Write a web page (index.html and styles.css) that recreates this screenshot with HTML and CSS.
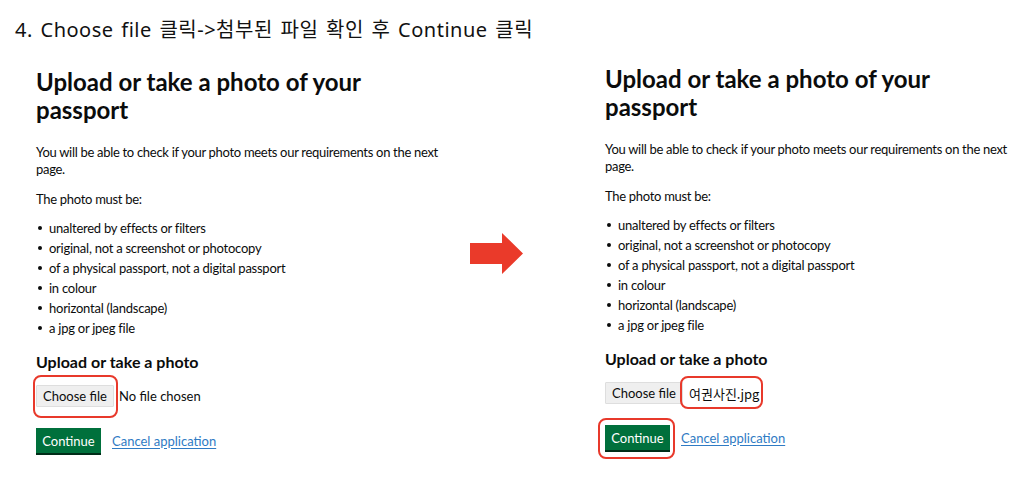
FILE: index.html
```html
<!DOCTYPE html>
<html lang="ko">
<head>
    <meta charset="UTF-8">
    <meta name="viewport" content="width=device-width, initial-scale=1.0">
    <title>여권 사진 업로드 안내</title>
    <link rel="stylesheet" href="styles.css">
</head>
<body>
    <h1 class="step">4. Choose file 클릭-&gt;첨부된 파일 확인 후 Continue 클릭</h1>

    <div class="compare">
        <!-- before: nothing chosen yet -->
        <section class="panel">
            <h2>Upload or take a photo of your passport</h2>
            <p>You will be able to check if your photo meets our requirements on the next page.</p>
            <p class="lead">The photo must be:</p>
            <ul class="rules">
                <li>unaltered by effects or filters</li>
                <li>original, not a screenshot or photocopy</li>
                <li>of a physical passport, not a digital passport</li>
                <li>in colour</li>
                <li>horizontal (landscape)</li>
                <li>a jpg or jpeg file</li>
            </ul>
            <h3>Upload or take a photo</h3>
            <div class="file-row">
                <span class="mark mark-choose"><button class="choose">Choose file</button></span>
                <span class="file-name">No file chosen</span>
            </div>
            <div class="actions">
                <button class="continue">Continue</button>
                <a href="#" class="cancel">Cancel application</a>
            </div>
        </section>

        <div class="arrow">
            <svg width="53" height="41" viewBox="0 0 53 41">
                <polygon points="0,10 32,10 32,0 53,20.5 32,41 32,31 0,31" fill="#ea3a2a"/>
            </svg>
        </div>

        <!-- after: file attached -->
        <section class="panel panel-after">
            <h2>Upload or take a photo of your passport</h2>
            <p>You will be able to check if your photo meets our requirements on the next page.</p>
            <p class="lead">The photo must be:</p>
            <ul class="rules">
                <li>unaltered by effects or filters</li>
                <li>original, not a screenshot or photocopy</li>
                <li>of a physical passport, not a digital passport</li>
                <li>in colour</li>
                <li>horizontal (landscape)</li>
                <li>a jpg or jpeg file</li>
            </ul>
            <h3>Upload or take a photo</h3>
            <div class="file-row">
                <button class="choose">Choose file</button>
                <span class="mark mark-name"><span class="file-name chosen">여권사진.jpg</span></span>
            </div>
            <div class="actions">
                <span class="mark mark-continue"><button class="continue">Continue</button></span>
                <a href="#" class="cancel">Cancel application</a>
            </div>
        </section>
    </div>
</body>
</html>
```

FILE: styles.css
```css
body {
    margin: 0;
    padding: 16px 0 24px 15px;
    background-color: #ffffff;
    color: #0b0c0c;
    font-family: Lato, "Noto Sans", sans-serif;
}
.step {
    margin: 0;
    font-family: "Noto Sans", "Noto Sans CJK KR", sans-serif;
    font-size: 20px;
    font-weight: normal;
    line-height: 28px;
    letter-spacing: 0.5px;
    word-spacing: 2px;
    color: #111;
}
.compare {
    display: grid;
    grid-template-columns: 434px 135px 1fr;
    margin-top: 24px;
    padding-left: 21px;
}
.panel h2 {
    margin: 0 0 20px;
    font-size: 24px;
    line-height: 28px;
    font-weight: 700;
    max-width: 420px;
}
.panel p {
    margin: 0 0 13px;
    font-size: 13px;
    line-height: 17px;
    letter-spacing: -0.3px;
    max-width: 412px;
}
.panel .lead {
    margin-bottom: 10px;
}
.rules {
    list-style: none;
    margin: 0 0 14px;
    padding: 0;
}
.rules li {
    position: relative;
    padding-left: 13px;
    font-size: 13px;
    line-height: 20px;
    letter-spacing: -0.25px;
}
.rules li::before {
    content: "";
    position: absolute;
    left: 2px;
    top: 8px;
    width: 4px;
    height: 4px;
    border-radius: 50%;
    background-color: #0b0c0c;
}
.panel h3 {
    margin: 0 0 13px;
    font-size: 16px;
    line-height: 20px;
    font-weight: 700;
}
.file-row {
    display: flex;
    align-items: center;
    height: 22px;
}
.choose {
    height: 22px;
    width: 78px;
    padding: 0;
    border: 1px solid #dedede;
    border-radius: 1px;
    background-color: #efefef;
    color: #0b0c0c;
    font-family: inherit;
    font-size: 13px;
}
.file-name {
    margin-left: 5px;
    font-size: 13px;
}
.file-name.chosen {
    font-family: "Noto Sans CJK KR", sans-serif;
    margin-left: 6px;
}
.actions {
    display: flex;
    align-items: center;
    gap: 11px;
    margin-top: 21px;
}
.continue {
    height: 25px;
    width: 65px;
    padding: 0;
    border: none;
    border-radius: 0;
    background-color: #00703c;
    box-shadow: 0 2px 0 #002d18;
    color: #ffffff;
    font-family: inherit;
    font-size: 13px;
}
.cancel {
    color: #2f7bc4;
    font-size: 13px;
    text-decoration: underline;
    text-underline-offset: 2px;
}
.arrow {
    margin-top: 165px;
}
.arrow svg {
    display: block;
}
.panel-after {
    margin-top: -3px;
}

/* red highlight rings drawn over the screenshot */
.mark {
    position: relative;
    display: inline-flex;
}
.mark::after {
    content: "";
    position: absolute;
    border: 2px solid #e8392b;
    border-radius: 8px;
    pointer-events: none;
}
.mark-choose::after {
    inset: -10px -4px -11px -3px;
}
.mark-name::after {
    inset: -8px -4px -6px -3px;
}
.mark-continue::after {
    top: -7px;
    right: -5px;
    bottom: -9px;
    left: -7px;
}
```
